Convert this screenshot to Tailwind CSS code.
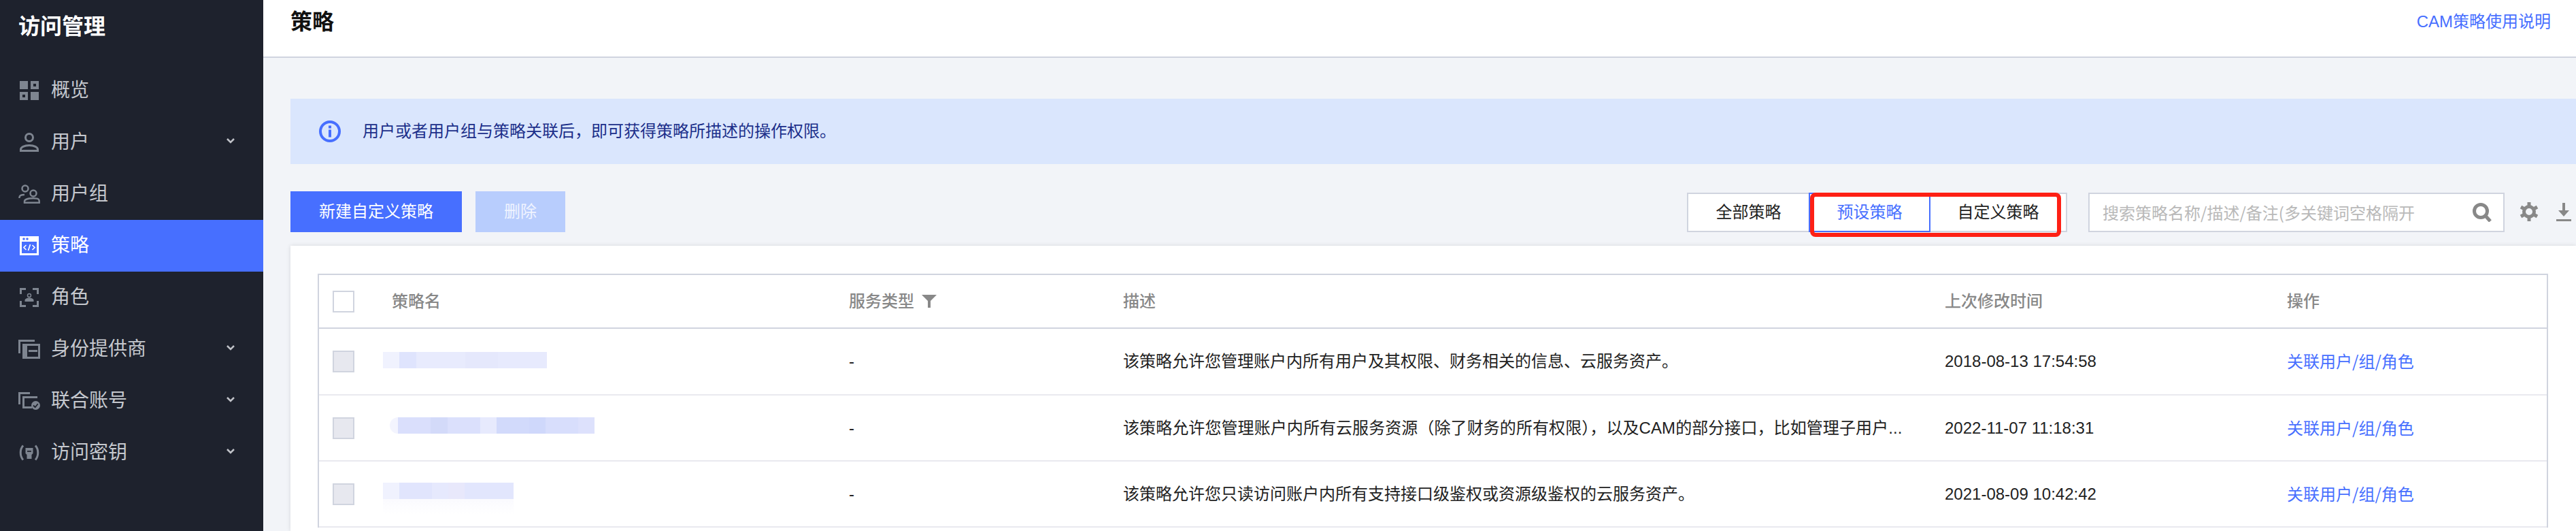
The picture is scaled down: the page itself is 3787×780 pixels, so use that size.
<!DOCTYPE html>
<html lang="zh-CN">
<head>
    <meta charset="UTF-8">
    <title>访问管理 - 策略</title>
    <script src="https://cdn.jsdelivr.net/npm/@tailwindcss/browser@4"></script>
</head>
<body class="flex w-[3787px] h-[780px] overflow-hidden bg-[#f2f4f8] text-[24px] text-[#222222] font-['Liberation_Sans','Noto_Sans_CJK_SC',sans-serif]">

    <!-- 侧边栏 -->
    <aside class="w-[387px] shrink-0 bg-[#1e222d] text-[28px] text-[#c5c8ce]">
        <div class="h-[78px] mb-[17px] pl-[27px] flex items-center text-[32px] font-bold text-white">访问管理</div>
        <nav>
            <a class="h-[76px] pl-[27px] pr-[42px] flex items-center gap-4">
                <span class="w-8 flex justify-center">
                    <svg width="28" height="28" viewBox="0 0 28 28" fill="#7e8590"><path d="M0 0h12v12H0z"/><path fill-rule="evenodd" d="M16 0h12v12H16zM20 4v4h4V4z"/><path fill-rule="evenodd" d="M0 16h12v12H0zM4 20v4h4v-4z"/><path d="M16 16h12v12H16z"/></svg>
                </span>
                概览
            </a>
            <a class="h-[76px] pl-[27px] pr-[42px] flex items-center gap-4">
                <span class="w-8 flex justify-center">
                    <svg width="28" height="28" viewBox="0 0 28 28" fill="none" stroke="#7e8590" stroke-width="3"><circle cx="14" cy="7" r="5.5"/><path d="M1.5 26.5v-2c0-3 5-6 12.5-6s12.5 3 12.5 6v2z"/></svg>
                </span>
                用户
                <svg class="ml-auto mb-1" width="12" height="8" viewBox="0 0 12 8" fill="none" stroke="#c0c2c8" stroke-width="2.5"><path d="M1 1l5 5 5-5"/></svg>
            </a>
            <a class="h-[76px] pl-[27px] pr-[42px] flex items-center gap-4">
                <span class="w-8 flex justify-center">
                    <svg width="32" height="28" viewBox="0 0 32 28" fill="none" stroke="#7e8590" stroke-width="2.5"><circle cx="10" cy="6" r="4.5"/><circle cx="22" cy="13" r="4.5"/><path d="M1.5 20v-1c0-2.500 3-4 7.500-4"/><path d="M9 26.700v-2c0-2.500 5-4.500 13-4.500s8.700 2 8.700 4.500v2z"/></svg>
                </span>
                用户组
            </a>
            <a class="h-[76px] pl-[27px] pr-[42px] flex items-center gap-4 bg-[#476fff] text-white">
                <span class="w-8 flex justify-center">
                    <svg width="28" height="28" viewBox="0 0 28 28" fill="none"><path fill="#ffffff" d="M0 0h28v28H0z"/><circle cx="6" cy="4" r="1.800" fill="#476fff"/><circle cx="11" cy="4" r="1.800" fill="#476fff"/><path fill="#476fff" d="M3 8h22v17H3z"/><path stroke="#ffffff" stroke-width="1.700" d="M9.500 13l-3.500 3.500 3.500 3.500M18.500 13l3.500 3.500-3.500 3.500M15.500 12l-3 9"/></svg>
                </span>
                策略
            </a>
            <a class="h-[76px] pl-[27px] pr-[42px] flex items-center gap-4">
                <span class="w-8 flex justify-center">
                    <svg width="28" height="28" viewBox="0 0 28 28" fill="none" stroke="#7e8590" stroke-width="3"><path d="M9 1.500H1.500V9M19 1.500h7.500V9M1.500 19v7.500H9M26.500 19v7.500H19"/><circle cx="14" cy="11" r="2.500" stroke-width="1.500"/><path fill="#7e8590" stroke="none" d="M7.500 20v-2c0-2 3.500-3.500 6.500-3.500s6.500 1.500 6.500 3.500v2z"/></svg>
                </span>
                角色
            </a>
            <a class="h-[76px] pl-[27px] pr-[42px] flex items-center gap-4">
                <span class="w-8 flex justify-center">
                    <svg width="32" height="28" viewBox="0 0 32 28" fill="none" stroke="#7e8590" stroke-width="3"><path d="M24 1.500H1.500V20"/><path d="M7.500 7.500h23v19h-23z"/><path fill="#7e8590" stroke="none" d="M9 9h4v16H9zM15 15h13v3H15z"/></svg>
                </span>
                身份提供商
                <svg class="ml-auto mb-1" width="12" height="8" viewBox="0 0 12 8" fill="none" stroke="#c0c2c8" stroke-width="2.500"><path d="M1 1l5 5 5-5"/></svg>
            </a>
            <a class="h-[76px] pl-[27px] pr-[42px] flex items-center gap-4">
                <span class="w-8 flex justify-center">
                    <svg width="32" height="26" viewBox="0 0 32 26" fill="none" stroke="#7e8590" stroke-width="3"><path d="M17 1.500H1.500V18"/><path d="M28 7.500H7.500v15H20"/><circle cx="25.500" cy="19.500" r="6.500" fill="#7e8590" stroke="none"/><path stroke="#1e222d" stroke-width="1.800" d="M22 19.500l2.700 2.700 4-5"/></svg>
                </span>
                联合账号
                <svg class="ml-auto mb-1" width="12" height="8" viewBox="0 0 12 8" fill="none" stroke="#c0c2c8" stroke-width="2.500"><path d="M1 1l5 5 5-5"/></svg>
            </a>
            <a class="h-[76px] pl-[27px] pr-[42px] flex items-center gap-4">
                <span class="w-8 flex justify-center">
                    <svg width="32" height="24" viewBox="0 0 32 24" fill="none" stroke="#7e8590" stroke-width="3"><path d="M7 1.500C2 7 2 17 7 22.500M25 1.500c5 5.500 5 15.500 0 21"/><path fill="#7e8590" fill-rule="evenodd" stroke="none" d="M10.500 5h11v8l-2 2v6h-7v-6l-2-2zM13 9v1.800h6V9z"/></svg>
                </span>
                访问密钥
                <svg class="ml-auto mb-1" width="12" height="8" viewBox="0 0 12 8" fill="none" stroke="#c0c2c8" stroke-width="2.500"><path d="M1 1l5 5 5-5"/></svg>
            </a>
        </nav>
    </aside>

    <main class="flex-1 min-w-0 flex flex-col">
        <!-- 顶栏 -->
        <header class="h-[85px] shrink-0 pb-[19px] pl-10 pr-[37px] flex items-center justify-between bg-white border-b-2 border-[#d0d4df]">
            <h1 class="text-[32px] font-bold text-[#111111]">策略</h1>
            <a class="text-[#476fff]">CAM策略使用说明</a>
        </header>

        <div class="flex-1 min-h-0 pl-10 pt-[60px] flex flex-col">
            <!-- 提示 -->
            <div class="h-[96px] shrink-0 pl-[42px] flex items-center gap-8 bg-[#dae6fd] text-[#1c2f8a]">
                <svg width="32" height="32" viewBox="0 0 32 32" fill="none"><circle cx="16" cy="16" r="14" stroke="#476fff" stroke-width="4"/><path fill="#476fff" d="M14 7.500h4v4h-4zM14 13.500h4v11h-4z"/></svg>
                用户或者用户组与策略关联后，即可获得策略所描述的操作权限。
            </div>

            <!-- 工具栏 -->
            <div class="mt-10 h-[60px] shrink-0 pr-[7px] flex justify-between">
                <div class="flex gap-5">
                    <button class="w-[252px] h-[60px] bg-[#476fff] text-white">新建自定义策略</button>
                    <button class="w-[132px] h-[60px] bg-[#b8cdfd] text-[#f0f4ff]">删除</button>
                </div>
                <div class="flex items-center">
                    <div class="relative flex mt-px">
                        <button class="w-[181px] h-[58px] bg-white border-2 border-[#d0d4df]">全部策略</button>
                        <button class="relative z-10 -ml-0.5 w-[179px] h-[58px] bg-white border-2 border-[#476fff] text-[#476fff]">预设策略</button>
                        <button class="-ml-0.5 w-[203px] h-[58px] bg-white border-2 border-[#d0d4df]">自定义策略</button>
                        <!-- 截图上的红框标注 -->
                        <div class="absolute z-20 left-[181px] top-0 w-[369px] h-[65px] border-[6px] border-[#fe2015] rounded-lg"></div>
                    </div>
                    <div class="ml-[31px] mt-px w-[612px] h-[58px] pl-[19px] pr-[16px] flex items-center bg-white border-2 border-[#d0d4df]">
                        <input class="flex-1 min-w-0 outline-none placeholder:text-[#b9b9b9] font-['Noto_Sans_CJK_SC',sans-serif]" placeholder="搜索策略名称/描述/备注(多关键词空格隔开">
                        <svg width="30" height="28" viewBox="0 0 30 28" fill="none" stroke="#888888" stroke-width="5"><circle cx="13" cy="12" r="9.500"/><path d="M19 18l8 9"/></svg>
                    </div>
                    <svg class="ml-[22px]" width="28" height="28" viewBox="0 0 28 28" fill="none" stroke="#888888"><circle cx="14" cy="14" r="7.500" stroke-width="5"/><path stroke-width="5" d="M14 0v5M14 23v5M2 7l4.300 2.500M21.700 18.500L26 21M2 21l4.300-2.500M21.700 9.500L26 7"/></svg>
                    <svg class="ml-[26px]" width="22" height="27" viewBox="0 0 22 27" fill="#888888"><path d="M9 0h4v11h6l-8 9-8-9h6z"/><path d="M0 24h22v3H0z"/></svg>
                </div>
            </div>

            <!-- 列表 -->
            <section class="mt-5 flex-1 min-h-0 pl-10 pt-[41px] bg-white shadow-[0_0_6px_rgba(0,0,0,0.12)]">
                <div class="w-[3279px] border-x-2 border-t-2 border-[#d0d4df]">
                    <div class="h-[79px] grid grid-cols-[87px_672px_403px_1208px_503px_1fr] items-center border-b-2 border-[#d0d4df] text-[#888888] font-medium">
                        <div class="pl-5"><span class="block w-8 h-8 border-2 border-[#d0d4df]"></span></div>
                        <div class="pl-5">策略名</div>
                        <div class="pl-5 flex items-center">服务类型<svg class="ml-[11px]" width="22" height="19" viewBox="0 0 22 19" fill="#888888"><path d="M0 0h22l-9 9v10H9V9z"/></svg></div>
                        <div class="pl-5">描述</div>
                        <div class="pl-5">上次修改时间</div>
                        <div class="pl-5">操作</div>
                    </div>

                    <div class="h-[98px] grid grid-cols-[87px_672px_403px_1208px_503px_1fr] items-center border-b-2 border-[#e9e9ef]">
                        <div class="pl-5"><span class="block w-8 h-8 bg-[#e7e8ef] border-2 border-[#d0d4df]"></span></div>
                        <div class="ml-[7px] mb-1 h-6 flex">
                            <i class="w-6 bg-[#f0f2fe]"></i><i class="w-[25px] bg-[#dfe4fd]"></i><i class="w-[72px] bg-[#e8ebfd]"></i><i class="w-12 bg-[#e5e8fc]"></i><i class="w-[72px] bg-[#e7eafd]"></i>
                        </div>
                        <div class="pl-5">-</div>
                        <div class="pl-5">该策略允许您管理账户内所有用户及其权限、财务相关的信息、云服务资产。</div>
                        <div class="pl-5">2018-08-13 17:54:58</div>
                        <div class="pl-5 mb-0.5 text-[#476fff] font-['Noto_Sans_CJK_SC',sans-serif]">关联用户/组/角色</div>
                    </div>

                    <div class="h-[97px] grid grid-cols-[87px_672px_403px_1208px_503px_1fr] items-center border-b-2 border-[#e9e9ef]">
                        <div class="pl-5"><span class="block w-8 h-8 bg-[#e7e8ef] border-2 border-[#d0d4df]"></span></div>
                        <div class="ml-[17px] mb-2 h-6 flex">
                            <i class="w-3 bg-[#f3f4fe] rounded-l-full"></i><i class="w-12 bg-[#dadffc]"></i><i class="w-[25px] bg-[#d3daf9]"></i><i class="w-12 bg-[#dbe0fc]"></i><i class="w-6 bg-[#e7eafd]"></i><i class="w-12 bg-[#d2dafb]"></i><i class="w-6 bg-[#cfd8fb]"></i><i class="w-12 bg-[#d8defc]"></i><i class="w-6 bg-[#dde1fc]"></i>
                        </div>
                        <div class="pl-5">-</div>
                        <div class="pl-5 tracking-[0.08px]">该策略允许您管理账户内所有云服务资源（除了财务的所有权限），以及CAM的部分接口，比如管理子用户...</div>
                        <div class="pl-5">2022-11-07 11:18:31</div>
                        <div class="pl-5 mb-0.5 text-[#476fff] font-['Noto_Sans_CJK_SC',sans-serif]">关联用户/组/角色</div>
                    </div>

                    <div class="h-[97px] grid grid-cols-[87px_672px_403px_1208px_503px_1fr] items-center border-b-2 border-[#e9e9ef]">
                        <div class="pl-5"><span class="block w-8 h-8 bg-[#e7e8ef] border-2 border-[#d0d4df]"></span></div>
                        <div class="ml-[7px] mt-3 w-48">
                            <div class="h-6 flex">
                                <i class="w-6 bg-[#f0f2fe]"></i><i class="w-12 bg-[#e1e5fd]"></i><i class="w-6 bg-[#e6e9fd]"></i><i class="w-6 bg-[#e8e8fb]"></i><i class="w-[72px] bg-[#e2e6fd]"></i>
                            </div>
                            <div class="h-[22px] bg-linear-to-b from-[#fafafe] to-white"></div>
                        </div>
                        <div class="pl-5">-</div>
                        <div class="pl-5">该策略允许您只读访问账户内所有支持接口级鉴权或资源级鉴权的云服务资产。</div>
                        <div class="pl-5">2021-08-09 10:42:42</div>
                        <div class="pl-5 mb-0.5 text-[#476fff] font-['Noto_Sans_CJK_SC',sans-serif]">关联用户/组/角色</div>
                    </div>
                </div>
            </section>
        </div>
    </main>
</body>
</html>
